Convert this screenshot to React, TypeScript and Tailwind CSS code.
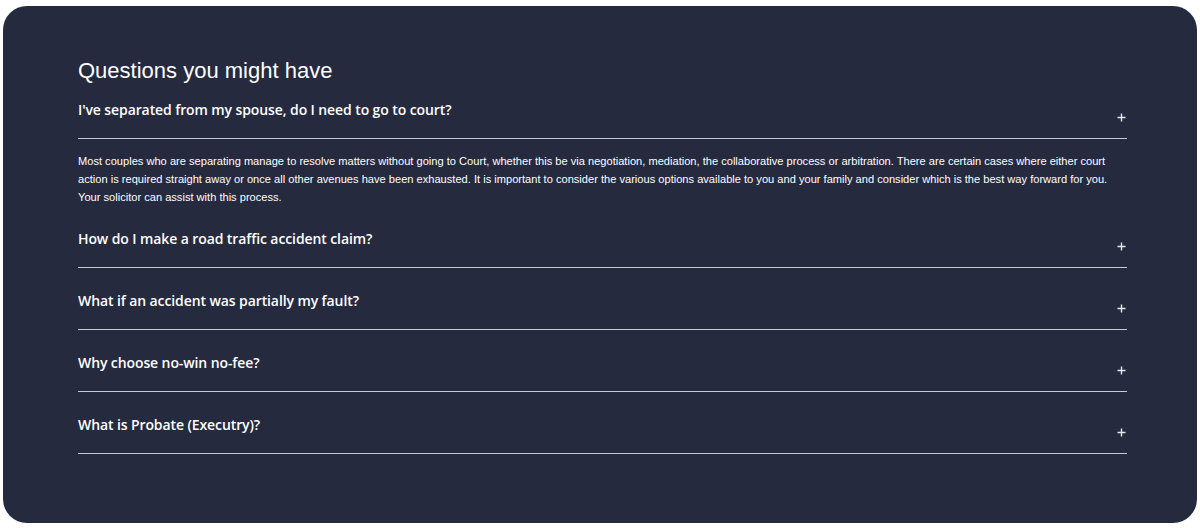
import React from "react";

const items = [
  {
    q: "I've separated from my spouse, do I need to go to court?",
    a: "Most couples who are separating manage to resolve matters without going to Court, whether this be via negotiation, mediation, the collaborative process or arbitration. There are certain cases where either court action is required straight away or once all other avenues have been exhausted. It is important to consider the various options available to you and your family and consider which is the best way forward for you. Your solicitor can assist with this process.",
  },
  { q: "How do I make a road traffic accident claim?" },
  { q: "What if an accident was partially my fault?" },
  { q: "Why choose no-win no-fee?" },
  { q: "What is Probate (Executry)?" },
];

function Plus() {
  return (
    <svg width="9" height="9" viewBox="0 0 9 9" className="shrink-0">
      <path d="M4.5 0.5v8M0.5 4.5h8" stroke="#e6e7ec" strokeWidth="1.4" />
    </svg>
  );
}

export default function App() {
  return (
    <div className="w-[1200px] h-[528px] bg-white pt-[6px] pl-[3px] pr-[3px] pb-[5px]">
      <div className="h-full rounded-[24px] bg-[#252a3f] pt-[52px] pl-[75px] pr-[70px]">
        <h2
          className="text-[22px] leading-[26px] text-white"
          style={{ fontFamily: '"Liberation Sans", Arial, sans-serif' }}
        >
          Questions you might have
        </h2>
        <div className="mt-[15px]">
          {items.map((it, i) => (
            <div key={i} className={i === 0 ? "" : "pt-[22px]"}>
              <div className="border-b border-[#c9cbd3] pb-[16px] flex justify-between items-start">
                <span
                  className="text-[14px] leading-[22px] font-semibold text-white tracking-[-0.1px]"
                  style={{ fontFamily: '"Open Sans", sans-serif' }}
                >
                  {it.q}
                </span>
                <span className="mt-[14px] mr-[1px]">
                  <Plus />
                </span>
              </div>
              {it.a && (
                <p
                  className="pt-[13px] text-[11.1px] leading-[18px] text-white"
                  style={{ fontFamily: '"Liberation Sans", Arial, sans-serif' }}
                >
                  {it.a}
                </p>
              )}
            </div>
          ))}
        </div>
      </div>
    </div>
  );
}
